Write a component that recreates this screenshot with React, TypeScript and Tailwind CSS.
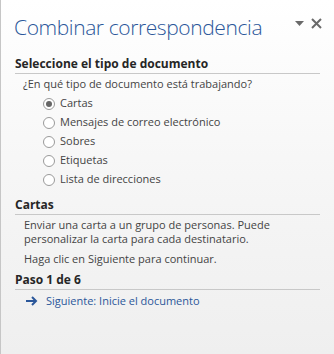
import React from 'react';

const options = [
  'Cartas',
  'Mensajes de correo electrónico',
  'Sobres',
  'Etiquetas',
  'Lista de direcciones',
];

function Radio({ checked }: { checked: boolean }) {
  return (
    <span className="flex h-[12px] w-[12px] items-center justify-center rounded-full border border-[#9a9a9a] bg-white">
      {checked && <span className="h-[6px] w-[6px] rounded-full bg-[#666666]" />}
    </span>
  );
}

function SectionHeader({ children }: { children: React.ReactNode }) {
  return (
    <div className="mx-[14px] border-b border-[#c8c8c8] pb-[1px] text-[12px] font-bold leading-[17px] text-[#262626]">
      {children}
    </div>
  );
}

export default function App() {
  return (
    <div
      className="flex h-[354px] w-[334px] flex-col border-l border-[#c6c6c6] bg-gradient-to-b from-white via-[#f6f6f6] to-[#efefef] text-[#444444]"
      style={{ fontFamily: '"Segoe UI", "Open Sans", "Noto Sans", sans-serif' }}
    >
      <div className="flex items-start justify-between pl-[13px] pr-[12px] pt-[12px]">
        <h1 className="text-[21px] font-light leading-[30px] tracking-[-0.4px] text-[#2b579a]">
          Combinar correspondencia
        </h1>
        <div className="flex items-center gap-[7px] pt-[6px]">
          <svg width="9" height="5" viewBox="0 0 9 5">
            <path d="M0 0 H9 L4.5 5 Z" fill="#6a6a6a" />
          </svg>
          <svg width="11" height="11" viewBox="0 0 11 11">
            <path d="M1 1 L10 10 M10 1 L1 10" stroke="#6a6a6a" strokeWidth="2" />
          </svg>
        </div>
      </div>

      <div className="mt-[13px]">
        <SectionHeader>Seleccione el tipo de documento</SectionHeader>
        <p className="ml-[22px] mt-[2px] text-[11px] leading-[16px]">
          ¿En qué tipo de documento está trabajando?
        </p>
        <div className="ml-[42px] mt-[2px] flex flex-col">
          {options.map((o, i) => (
            <label key={o} className="flex h-[19px] items-center gap-[5px] text-[11px]">
              <Radio checked={i === 0} />
              <span>{o}</span>
            </label>
          ))}
        </div>
      </div>

      <div className="mt-[7px]">
        <SectionHeader>Cartas</SectionHeader>
        <p className="ml-[23px] mt-[3px] mr-[14px] text-[11px] leading-[14px]">
          Enviar una carta a un grupo de personas. Puede personalizar la carta para cada destinatario.
        </p>
        <p className="ml-[23px] mt-[6px] text-[11px] leading-[14px]">
          Haga clic en Siguiente para continuar.
        </p>
      </div>

      <div className="mt-[5px]">
        <SectionHeader>Paso 1 de 6</SectionHeader>
        <div className="ml-[25px] mt-[3px] flex items-center gap-[8px] text-[11px] leading-[16px] text-[#2b579a]">
          <svg width="12" height="10" viewBox="0 0 12 10">
            <path d="M0 5 H10 M6 1 L10 5 L6 9" stroke="#2b579a" strokeWidth="2" fill="none" />
          </svg>
          <span>Siguiente: Inicie el documento</span>
        </div>
      </div>
    </div>
  );
}
